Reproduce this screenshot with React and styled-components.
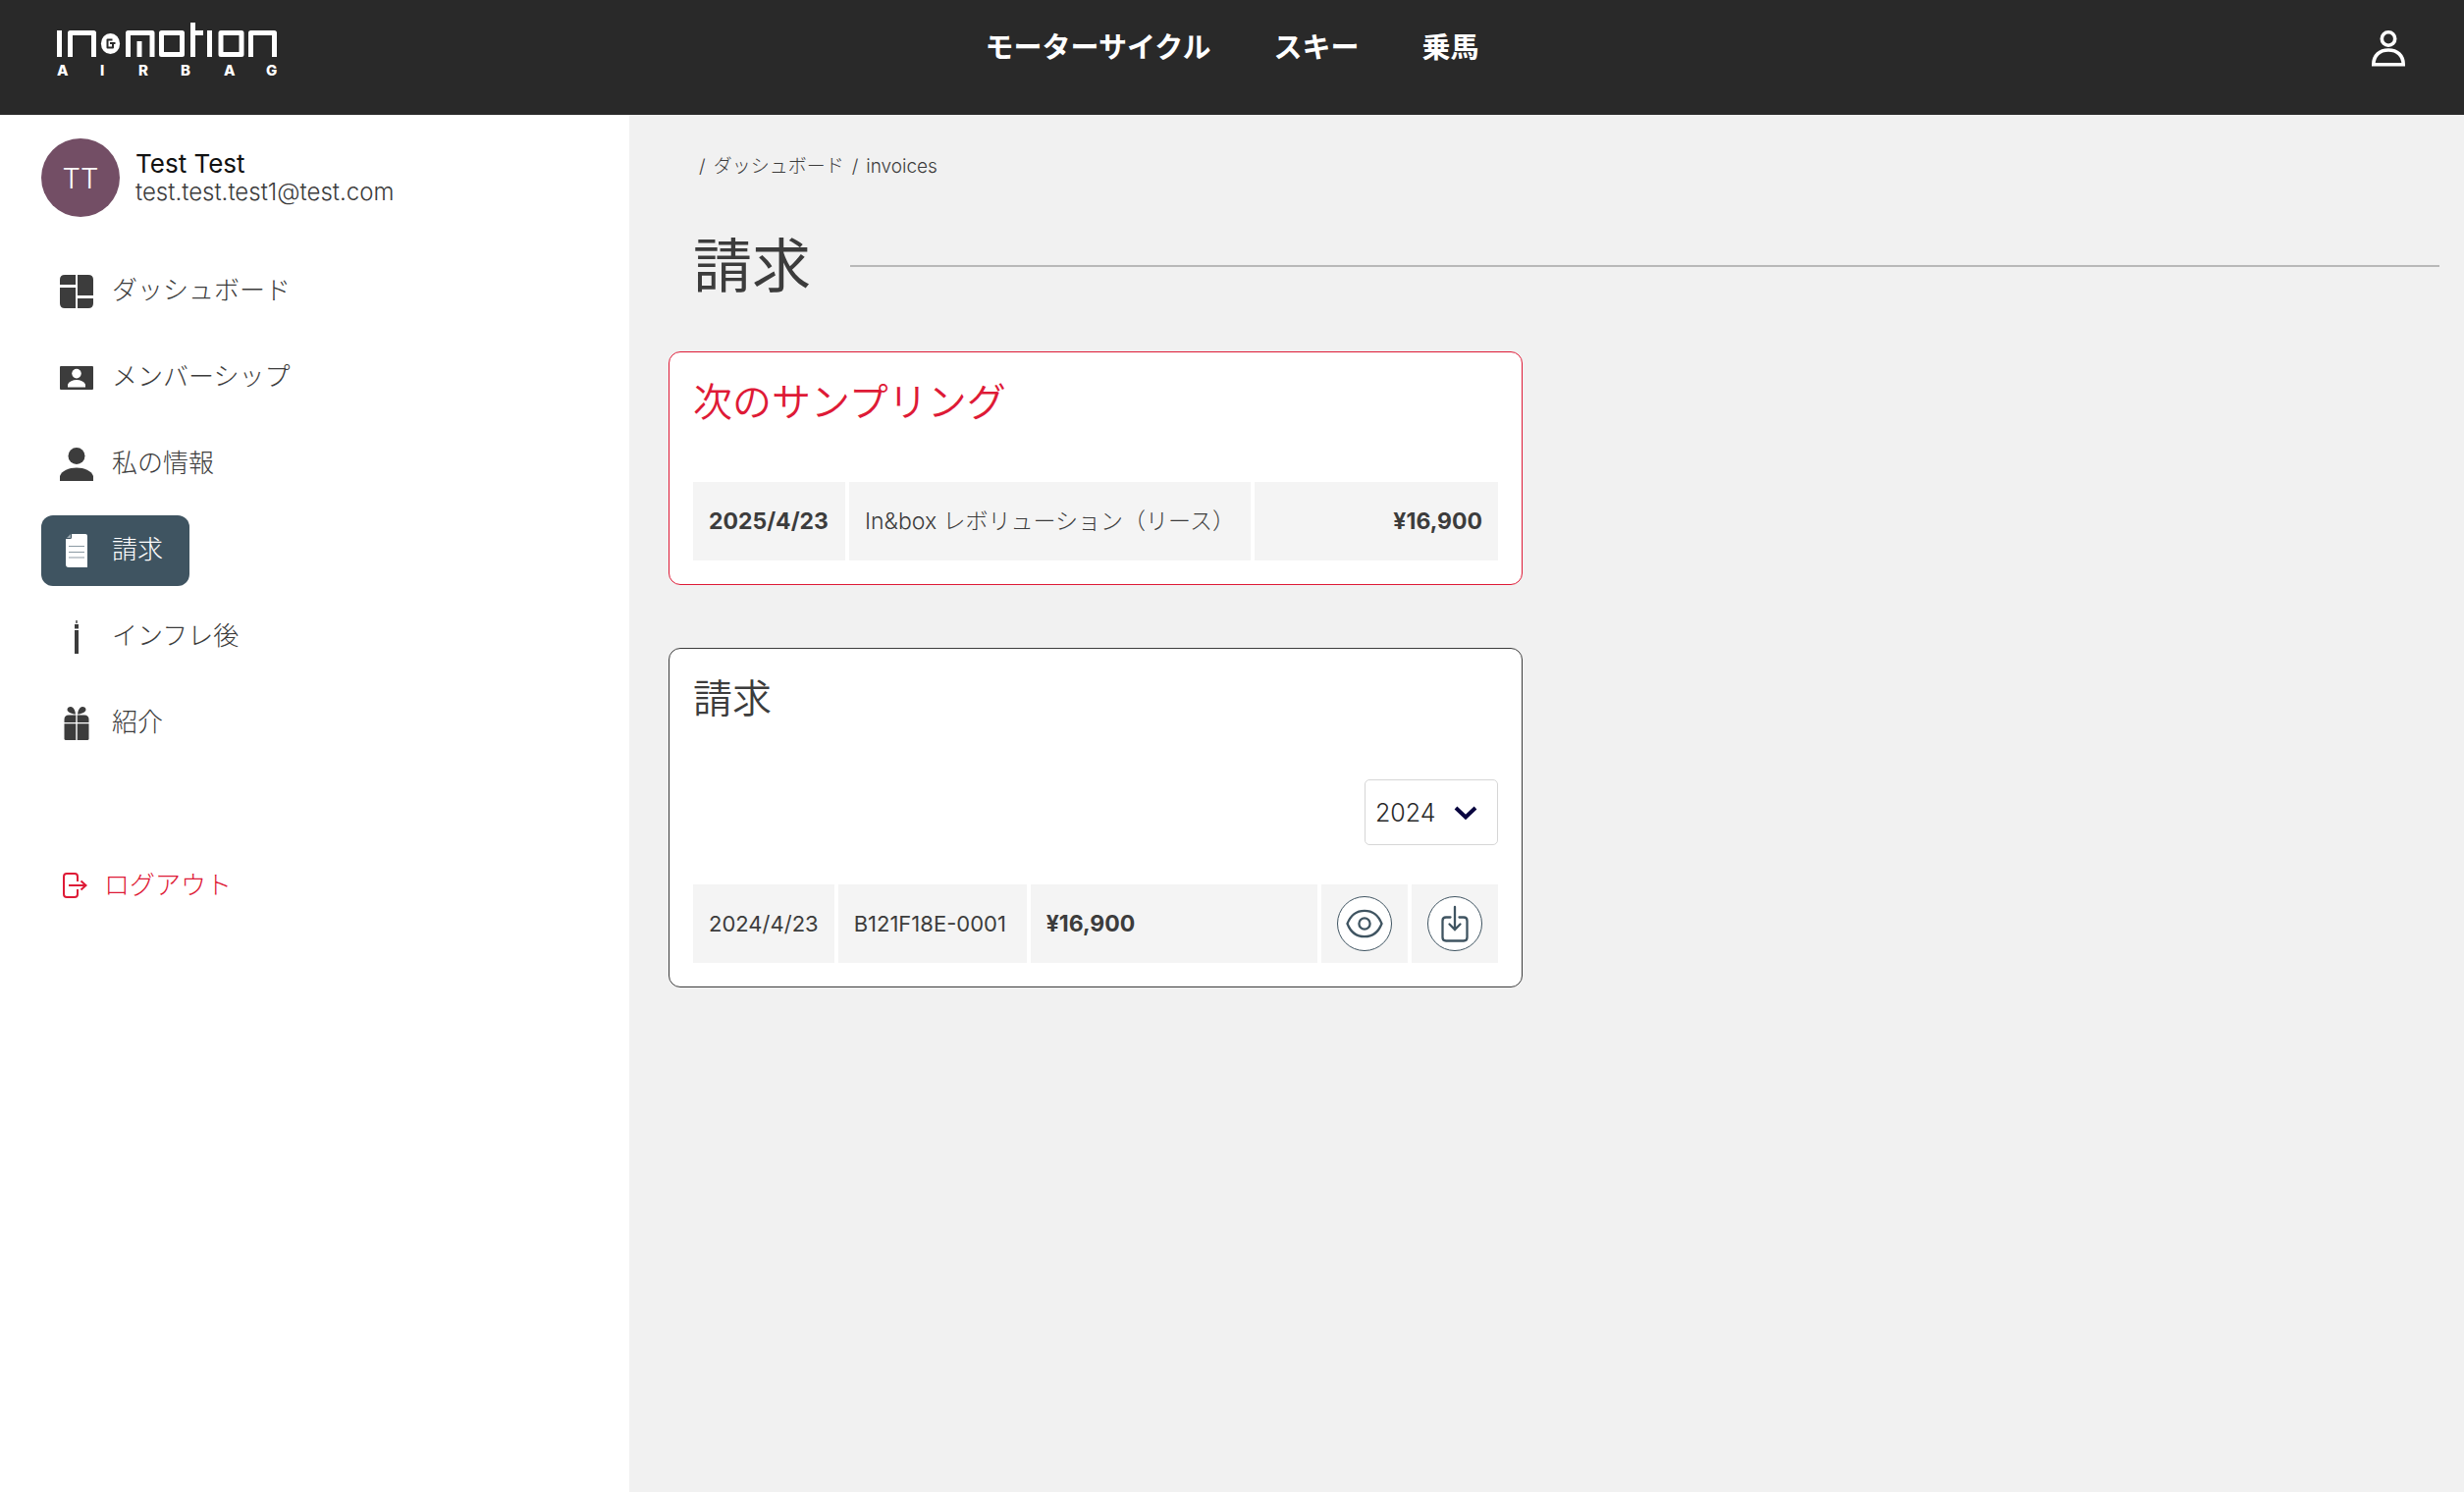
import React from "react";
import styled, { createGlobalStyle, css } from "styled-components";

const color = {
  dark: "#292929",
  text: "#3c3c3c",
  slate: "#3f5461",
  red: "#de1a36",
  page: "#f1f1f1",
  cell: "#f4f4f4",
};

const GlobalStyle = createGlobalStyle`
  *, *::before, *::after { box-sizing: border-box; }
  body {
    margin: 0;
    background: ${color.page};
    color: ${color.text};
    font-family: Inter, "Noto Sans CJK JP", sans-serif;
    font-weight: 300;
    font-size: 22px;
  }
  a { color: inherit; text-decoration: none; }
  h1, h2, p, ul, ol { margin: 0; padding: 0; font-weight: 300; }
  ul, ol { list-style: none; }
  svg { display: block; flex: none; }
`;

const Page = styled.div`
  display: flex;
  flex-direction: column;
  min-height: 100vh;
`;

const Header = styled.header`
  display: grid;
  grid-template-columns: 1fr auto 1fr;
  align-items: center;
  padding: 0 58px 19px;
  background: ${color.dark};
  color: #fff;
`;

const LogoLink = styled.a`
  justify-self: start;
  padding: 22px 0 16px;
`;

const TopNav = styled.nav`
  display: flex;
  gap: 64px;
  font-size: 29px;
  line-height: 40px;
  a { font-weight: 700; }
`;

const AccountButton = styled.button`
  justify-self: end;
  padding: 0;
  border: 0;
  background: none;
  color: inherit;
  cursor: pointer;
`;

const Body = styled.div`
  display: flex;
  flex: 1;
`;

const Sidebar = styled.aside`
  flex: 0 0 641px;
  padding: 24px 42px;
  background: #fff;
`;

const Profile = styled.div`
  display: flex;
  align-items: center;
  gap: 16px;
  margin-bottom: 40px;
`;

const Avatar = styled.span`
  display: grid;
  place-items: center;
  width: 80px;
  height: 80px;
  border-radius: 50%;
  background: #734e65;
  color: #fff;
  font-size: 29px;
`;

const ProfileName = styled.p`
  font-size: 26px;
  line-height: 30px;
  font-weight: 400;
  color: #111;
`;

const ProfileMail = styled.p`
  font-size: 24px;
  line-height: 28px;
`;

const Menu = styled.ul`
  display: flex;
  flex-direction: column;
  align-items: flex-start;
  gap: 16px;
`;

const MenuLink = styled.a`
  display: flex;
  align-items: center;
  gap: 19px;
  height: 72px;
  padding: 0 27px 0 19px;
  border-radius: 12px;
  font-size: 26px;
  line-height: 40px;
  ${({ $active }) =>
    $active &&
    css`
      background: ${color.slate};
      color: #fff;
    `}
`;

const MenuText = styled.span`
  padding-bottom: 3px;
`;

const LogoutButton = styled.button`
  display: flex;
  align-items: center;
  gap: 17px;
  margin-top: 104px;
  padding: 0 22px;
  border: 0;
  background: none;
  color: ${color.red};
  font: inherit;
  font-size: 26px;
  line-height: 50px;
  cursor: pointer;
`;

const Main = styled.main`
  flex: 1;
  min-width: 0;
  padding: 38px 25px 40px 40px;
`;

const Crumbs = styled.ol`
  display: flex;
  gap: 8px;
  padding-left: 31px;
  font-size: 19px;
  line-height: 30px;
  li { display: flex; gap: 8px; }
  li::before { content: "/"; }
`;

const TitleRow = styled.div`
  display: flex;
  align-items: center;
  gap: 40px;
  margin: 41px 0 42px;
  padding-left: 25px;
`;

const Title = styled.h1`
  font-size: 60px;
  line-height: 90px;
  font-weight: 400;
`;

const Rule = styled.hr`
  flex: 1;
  height: 2px;
  margin: 0;
  border: 0;
  background: #b8b8b8;
`;

const Cards = styled.div`
  display: grid;
  grid-template-columns: 1fr 1fr;
  gap: 64px;
`;

const Card = styled.section`
  grid-column: 1;
  padding: 24px;
  border: 1px solid ${({ $accent }) => ($accent ? color.red : color.text)};
  border-radius: 12px;
  background: #fff;
  h2 { color: ${({ $accent }) => ($accent ? color.red : color.text)}; }
`;

const CardTitle = styled.h2`
  margin-bottom: 54px;
  font-size: 40px;
  line-height: 54px;
  font-weight: 350;
`;

const Filter = styled.div`
  position: relative;
  width: fit-content;
  margin: 0 0 40px auto;
  padding-top: 1px;
  svg {
    position: absolute;
    top: 27px;
    right: 21px;
    pointer-events: none;
  }
`;

const YearSelect = styled.select`
  display: block;
  width: 136px;
  height: 67px;
  padding: 0 10px;
  border: 1px solid #d6d6d6;
  border-radius: 5px;
  background: #fff;
  color: #292929;
  font: inherit;
  font-size: 25px;
  appearance: none;
`;

const Table = styled.table`
  width: 100%;
  border-spacing: 0;
  white-space: nowrap;
`;

const Cell = styled.td`
  width: ${({ $width }) => ($width ? `${$width}px` : "auto")};
  height: 80px;
  padding: 0 16px;
  background: ${color.cell};
  font-size: ${({ $weight }) => ($weight ? 23 : 22)}px;
  line-height: 28px;
  font-weight: ${({ $weight }) => $weight || 400};
  text-align: ${({ $align }) => $align || "left"};
  & + & { border-left: 4px solid #fff; }
`;

const RoundButton = styled.button`
  display: grid;
  place-items: center;
  width: 56px;
  height: 56px;
  padding: 0;
  border: 1px solid ${color.slate};
  border-radius: 50%;
  background: #fff;
  color: ${color.slate};
  cursor: pointer;
`;

const Logo = () => (
  <svg width="226" height="60" viewBox="0 0 226 60" fill="none" stroke="#fff" strokeWidth="5" strokeLinejoin="round">
    <line x1="2.5" y1="9" x2="2.5" y2="36" />
    <polyline points="13.5,36 13.5,11.5 37.5,11.5 37.5,36" />
    <ellipse cx="54.5" cy="22.5" rx="9.6" ry="10.5" fill="#fff" stroke="none" />
    <g stroke="#292929" strokeWidth="2">
      <polyline points="56.5,18.5 51.5,18.5 51.5,26.5 57,26.5 57,22" />
      <line x1="54" y1="22" x2="59.5" y2="22" />
    </g>
    <polyline points="72.5,36 72.5,11.5 97,11.5 97,36" />
    <line x1="84" y1="20" x2="84" y2="36" />
    <rect x="106.5" y="11.5" width="21" height="22" />
    <line x1="138.5" y1="1" x2="138.5" y2="36" />
    <line x1="138" y1="11.5" x2="149" y2="11.5" />
    <line x1="155.5" y1="9" x2="155.5" y2="36" />
    <rect x="167" y="11.5" width="21" height="22" />
    <polyline points="197.5,36 197.5,11.5 221.5,11.5 221.5,36" />
    <text x="0 44 83 126 170 213" y="55" fontSize="15" fontWeight="800" fontFamily="Inter, sans-serif" fill="#fff" stroke="none">AIRBAG</text>
  </svg>
);

const AccountIcon = () => (
  <svg width="36" height="38" viewBox="0 0 36 38" fill="none" stroke="currentColor" strokeWidth="3.6">
    <circle cx="17" cy="9.5" r="6.7" />
    <path d="M1.8 35.8C1.8 26.5 8 21 17 21S32.200 26.500 32.200 35.800Z" />
  </svg>
);

const DashboardIcon = () => (
  <svg width="34" height="34" viewBox="0 0 34 34" fill="currentColor">
    <path d="M5 0H16V10H0V5Q0 0 5 0Z" />
    <path d="M0 13H16V34H5Q0 34 0 29Z" />
    <path d="M18 0H29Q34 0 34 5V21H18Z" />
    <path d="M18 24H34V29Q34 34 29 34H18Z" />
  </svg>
);

const MembershipIcon = () => (
  <svg width="34" height="34" viewBox="0 0 34 34">
    <rect y="5" width="34" height="24" rx="1" fill="currentColor" />
    <circle cx="17" cy="12.6" r="4.8" fill="#fff" />
    <path d="M8 26.5V23.5C9.500 20.500 13 19 17 19S24.500 20.500 26 23.500V26.500Z" fill="#fff" />
  </svg>
);

const PersonIcon = () => (
  <svg width="34" height="34" viewBox="0 0 34 34" fill="currentColor">
    <circle cx="17" cy="8.5" r="8.5" />
    <path d="M0 34V29C2 23.500 9 20.500 17 20.500S32 23.500 34 29V34Z" />
  </svg>
);

const InvoiceIcon = () => (
  <svg width="34" height="34" viewBox="0 0 34 34">
    <path d="M12 0H26Q28 0 28 2V34H9Q6 34 6 31V5H10.500Q12 5 12 3.500Z" fill="currentColor" />
    <path d="M7 4L11 0V4Z" fill="#9daab2" />
    <path d="M9 12.500H25M9 18.500H25M9 24H25" stroke="#8b9aa3" strokeWidth="1.200" />
  </svg>
);

const CartridgeIcon = () => (
  <svg width="34" height="34" viewBox="0 0 34 34" fill="currentColor">
    <rect x="16.300" y="0" width="1.400" height="3" />
    <rect x="15" y="4" width="4" height="4.500" />
    <rect x="15" y="10" width="4" height="24" />
  </svg>
);

const GiftIcon = () => (
  <svg width="34" height="34" viewBox="0 0 34 34" fill="currentColor">
    <path d="M16 7.500C11 7.500 7.500 5 7.500 3C7.500 1 9 0 11 0C14 0 15.500 4 16 7.500Z" />
    <path d="M18 7.500C23 7.500 26.500 5 26.500 3C26.500 1 25 0 23 0C20 0 18.500 4 18 7.500Z" />
    <path d="M9 8.500H16.300V16H4.500V13Q4.500 8.500 9 8.500Z" />
    <path d="M17.700 8.500H25Q29.500 8.500 29.500 13V16H17.700Z" />
    <path d="M4.500 17.300H16.300V34H6Q4.500 34 4.500 32.500Z" />
    <path d="M17.700 17.300H29.500V32.500Q29.500 34 28 34H17.700Z" />
  </svg>
);

const LogoutIcon = () => (
  <svg width="25" height="26" viewBox="0 0 25 26" fill="none" stroke="currentColor" strokeWidth="2">
    <path d="M15 9V4Q15 1 12 1H4Q1 1 1 4V22Q1 25 4 25H12Q15 25 15 22V17" />
    <path d="M6 13H23.500M18.500 8.500L23.500 13L18.500 17.500" />
  </svg>
);

const ChevronIcon = () => (
  <svg width="24" height="16" viewBox="0 0 24 16" fill="none" stroke="#09053f" strokeWidth="4">
    <path d="M2 3L12 12.500L22 3" />
  </svg>
);

const EyeIcon = () => (
  <svg width="38" height="30" viewBox="0 0 38 30" fill="none" stroke="currentColor" strokeWidth="2.300">
    <path d="M1.500 15C5 6 11 1.800 19 1.800S33 6 36.500 15C33 24 27 28.200 19 28.200S5 24 1.500 15Z" />
    <circle cx="19" cy="15" r="5.600" />
  </svg>
);

const DownloadIcon = () => (
  <svg width="28" height="38" viewBox="0 0 28 38" fill="none" stroke="currentColor" strokeWidth="2.300" strokeLinecap="round">
    <path d="M9.500 12.500H5Q1.500 12.500 1.500 16V33Q1.500 36.500 5 36.500H23Q26.500 36.500 26.500 33V16Q26.500 12.500 23 12.500H18.500" />
    <path d="M14 2V25M8.500 19.500L14 25L19.500 19.500" />
  </svg>
);

const menu = [
  { label: "ダッシュボード", Icon: DashboardIcon },
  { label: "メンバーシップ", Icon: MembershipIcon },
  { label: "私の情報", Icon: PersonIcon },
  { label: "請求", Icon: InvoiceIcon, active: true },
  { label: "インフレ後", Icon: CartridgeIcon },
  { label: "紹介", Icon: GiftIcon },
];

export default function App() {
  return (
    <Page>
      <GlobalStyle />
      <Header>
        <LogoLink href="#" aria-label="In&motion Airbag">
          <Logo />
        </LogoLink>
        <TopNav>
          <a href="#moto">モーターサイクル</a>
          <a href="#ski">スキー</a>
          <a href="#horse">乗馬</a>
        </TopNav>
        <AccountButton aria-label="アカウント">
          <AccountIcon />
        </AccountButton>
      </Header>
      <Body>
        <Sidebar>
          <Profile>
            <Avatar>TT</Avatar>
            <div>
              <ProfileName>Test Test</ProfileName>
              <ProfileMail>test.test.test1@test.com</ProfileMail>
            </div>
          </Profile>
          <nav>
            <Menu>
              {menu.map(({ label, Icon, active }) => (
                <li key={label}>
                  <MenuLink href="#" $active={active} aria-current={active ? "page" : undefined}>
                    <Icon />
                    <MenuText>{label}</MenuText>
                  </MenuLink>
                </li>
              ))}
            </Menu>
          </nav>
          <LogoutButton>
            <LogoutIcon />
            ログアウト
          </LogoutButton>
        </Sidebar>
        <Main>
          <Crumbs>
            <li><a href="#dashboard">ダッシュボード</a></li>
            <li>invoices</li>
          </Crumbs>
          <TitleRow>
            <Title>請求</Title>
            <Rule />
          </TitleRow>
          <Cards>
            <Card $accent>
              <CardTitle>次のサンプリング</CardTitle>
              <Table>
                <tbody>
                  <tr>
                    <Cell $width={155} $weight={700}>2025/4/23</Cell>
                    <Cell $width={412} $weight={300}>In&amp;box レボリューション（リース）</Cell>
                    <Cell $weight={700} $align="right">¥16,900</Cell>
                  </tr>
                </tbody>
              </Table>
            </Card>
            <Card>
              <CardTitle>請求</CardTitle>
              <Filter>
                <YearSelect aria-label="年" defaultValue="2024">
                  <option>2024</option>
                </YearSelect>
                <ChevronIcon />
              </Filter>
              <Table>
                <tbody>
                  <tr>
                    <Cell $width={143}>2024/4/23</Cell>
                    <Cell $width={196}>B121F18E-0001</Cell>
                    <Cell $weight={700}>¥16,900</Cell>
                    <Cell $width={92}>
                      <RoundButton aria-label="表示"><EyeIcon /></RoundButton>
                    </Cell>
                    <Cell $width={92}>
                      <RoundButton aria-label="ダウンロード"><DownloadIcon /></RoundButton>
                    </Cell>
                  </tr>
                </tbody>
              </Table>
            </Card>
          </Cards>
        </Main>
      </Body>
    </Page>
  );
}
